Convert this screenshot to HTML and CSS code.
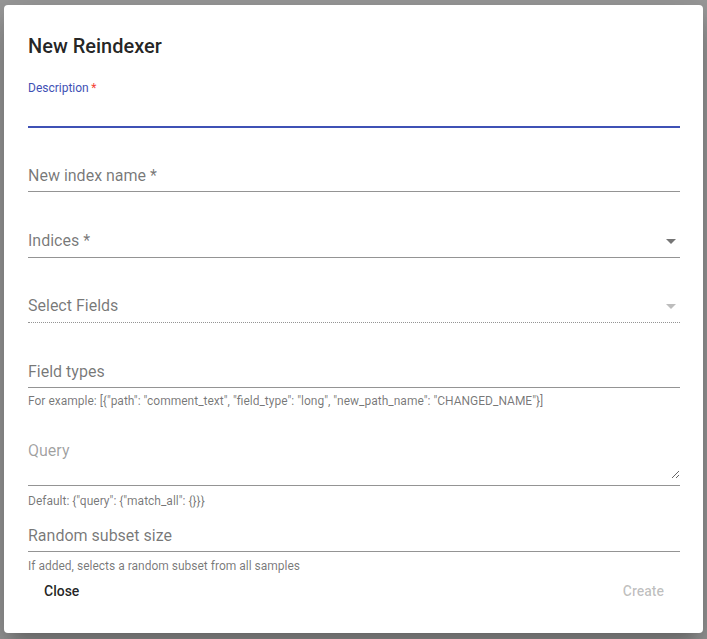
FILE: index.html
```html
<!DOCTYPE html>
<html>
<head>
<meta charset="utf-8">
<link rel="stylesheet" href="styles.css">
</head>
<body>
<div class="dialog">
  <h2 class="title">New Reindexer</h2>
  <div class="content">
    <div class="field field-desc focused">
      <label class="label shrink">Description<span class="ast">&#8201;*</span></label>
      <div class="input"><input type="text"></div>
    </div>
    <div class="field field-gap">
      <label class="label">New index name *</label>
      <div class="input"><input type="text"></div>
    </div>
    <div class="field field-gap-lg select">
      <label class="label">Indices *</label>
      <div class="input">
        <svg class="arrow" viewBox="0 0 24 24" width="24" height="24"><path d="M7 10l5 5 5-5z"/></svg>
      </div>
    </div>
    <div class="field field-gap select disabled">
      <label class="label">Select Fields</label>
      <div class="input">
        <svg class="arrow" viewBox="0 0 24 24" width="24" height="24"><path d="M7 10l5 5 5-5z"/></svg>
      </div>
    </div>
    <div class="field field-gap-lg">
      <label class="label">Field types</label>
      <div class="input"><input type="text"></div>
    </div>
    <p class="helper">For example: [{"path": "comment_text", "field_type": "long", "new_path_name": "CHANGED_NAME"}]</p>
    <div class="field field-query multiline">
      <label class="label light">Query</label>
      <div class="input"><textarea rows="2"></textarea></div>
    </div>
    <p class="helper helper-query">Default: {"query": {"match_all": {}}}</p>
    <div class="field field-random">
      <label class="label">Random subset size</label>
      <div class="input"><input type="text"></div>
    </div>
    <p class="helper helper-random">If added, selects a random subset from all samples</p>
  </div>
  <div class="actions">
    <button class="btn">Close</button>
    <button class="btn btn-disabled">Create</button>
  </div>
</div>
</body>
</html>
```
FILE: styles.css
```css
html, body {
  margin: 0;
  padding: 0;
}
body {
  background: #9b9b9b;
  font-family: Roboto, "Liberation Sans", sans-serif;
  height: 639px;
  overflow: hidden;
}
.dialog {
  margin: 5px 0 0 4px;
  width: 699px;
  box-sizing: border-box;
  background: #fff;
  border-radius: 4px;
  padding: 25px 23px 24px 24px;
  box-shadow: 0px 11px 15px -7px rgba(0,0,0,0.2), 0px 24px 38px 3px rgba(0,0,0,0.14), 0px 9px 46px 8px rgba(0,0,0,0.12);
}
.title {
  margin: 0;
  font-size: 20px;
  font-weight: 500;
  line-height: 32px;
  color: rgba(0,0,0,0.87);
}
.content {
  display: flex;
  flex-direction: column;
}
.field {
  position: relative;
  padding-top: 16px;
}
.field-desc { margin-top: 18px; }
.field-gap { margin-top: 16px; }
.field-gap-lg { margin-top: 17px; }
.field-query { margin-top: 12px; }
.field-random { margin-top: -3px; }
.label {
  position: absolute;
  left: 0;
  top: 24px;
  font-size: 16px;
  line-height: 16px;
  color: rgba(0,0,0,0.54);
  pointer-events: none;
  white-space: nowrap;
}
.label.shrink {
  top: 1.5px;
  font-size: 12px;
  line-height: 12px;
}
.label.light {
  color: rgba(0,0,0,0.38);
}
.focused .label { color: #3f51b5; }
.ast { color: #f44336; }
.input {
  position: relative;
  height: 32px;
  box-sizing: border-box;
  border-bottom: 1px solid rgba(0,0,0,0.42);
}
.focused .input {
  border-bottom: 2px solid #3f51b5;
}
.select .input { height: 33px; }
.disabled .input {
  border-bottom: 1px dotted rgba(0,0,0,0.42);
}
.input input {
  display: block;
  width: 100%;
  box-sizing: border-box;
  border: 0;
  outline: none;
  background: transparent;
  font: 16px Roboto, sans-serif;
  padding: 6px 0 6px;
  height: 30px;
}
.multiline .input {
  height: 51px;
  padding: 6px 0 6px;
}
.multiline textarea {
  display: block;
  width: 100%;
  height: 38px;
  box-sizing: border-box;
  border: 0;
  outline: none;
  padding: 0;
  margin: 0;
  font: 16px/19px Roboto, sans-serif;
  resize: vertical;
  background: transparent;
}
.arrow {
  position: absolute;
  right: -3px;
  top: calc(50% - 12px);
  fill: rgba(0,0,0,0.54);
}
.disabled .arrow {
  fill: rgba(0,0,0,0.26);
}
.helper {
  margin: 7px 0 0;
  font-size: 12px;
  line-height: 12px;
  color: rgba(0,0,0,0.54);
  white-space: nowrap;
}
.helper-query { margin-top: 9px; }
.helper-random { margin-top: 8px; }
.actions {
  display: flex;
  justify-content: space-between;
  margin-top: 1px;
}
.btn {
  background: none;
  border: 0;
  padding: 0 16px;
  height: 36px;
  line-height: 36px;
  font-family: Roboto, sans-serif;
  font-size: 14px;
  font-weight: 500;
  color: rgba(0,0,0,0.87);
  cursor: pointer;
}
.btn-disabled {
  color: rgba(0,0,0,0.26);
  cursor: default;
}
```
